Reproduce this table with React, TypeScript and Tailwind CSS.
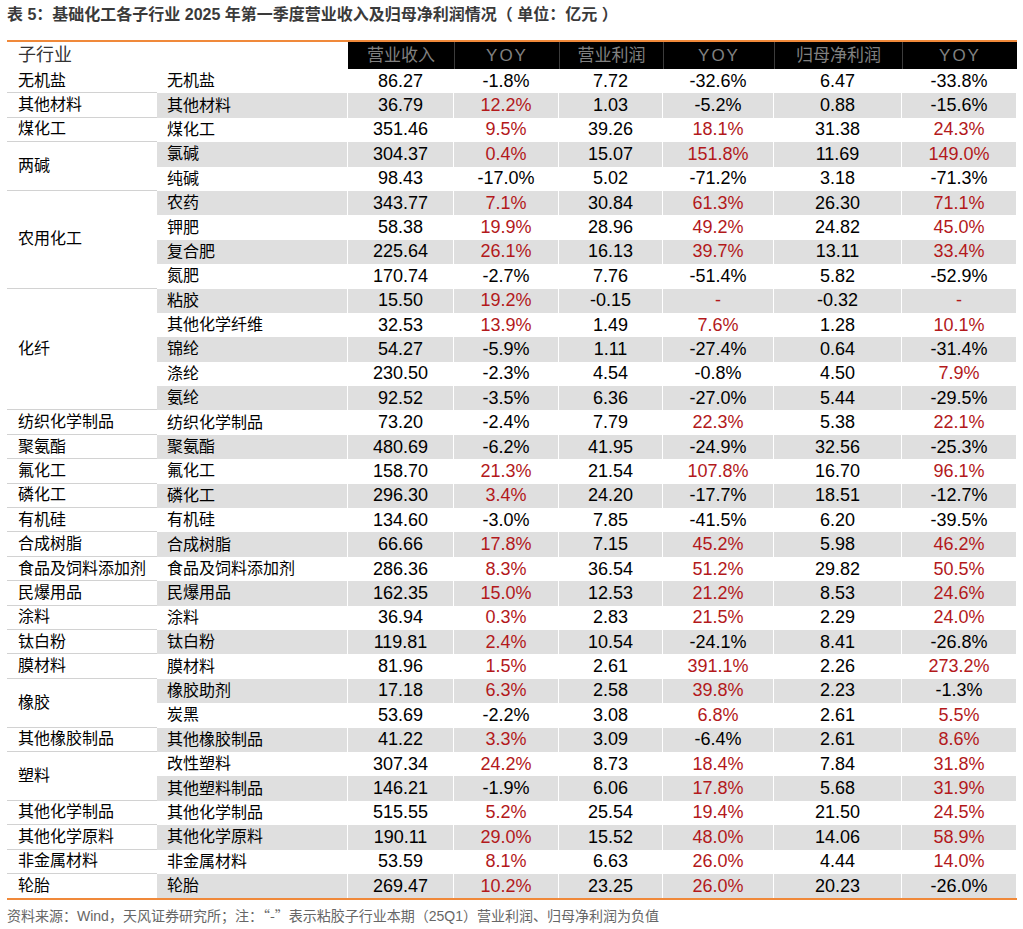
import React from 'react';

type Sub = { s: string; v: string[] };
type Group = { g: string; subs: Sub[] };

const groups: Group[] = [
  { g: '无机盐', subs: [{ s: '无机盐', v: ['86.27', '-1.8%', '7.72', '-32.6%', '6.47', '-33.8%'] }] },
  { g: '其他材料', subs: [{ s: '其他材料', v: ['36.79', '12.2%', '1.03', '-5.2%', '0.88', '-15.6%'] }] },
  { g: '煤化工', subs: [{ s: '煤化工', v: ['351.46', '9.5%', '39.26', '18.1%', '31.38', '24.3%'] }] },
  {
    g: '两碱',
    subs: [
      { s: '氯碱', v: ['304.37', '0.4%', '15.07', '151.8%', '11.69', '149.0%'] },
      { s: '纯碱', v: ['98.43', '-17.0%', '5.02', '-71.2%', '3.18', '-71.3%'] },
    ],
  },
  {
    g: '农用化工',
    subs: [
      { s: '农药', v: ['343.77', '7.1%', '30.84', '61.3%', '26.30', '71.1%'] },
      { s: '钾肥', v: ['58.38', '19.9%', '28.96', '49.2%', '24.82', '45.0%'] },
      { s: '复合肥', v: ['225.64', '26.1%', '16.13', '39.7%', '13.11', '33.4%'] },
      { s: '氮肥', v: ['170.74', '-2.7%', '7.76', '-51.4%', '5.82', '-52.9%'] },
    ],
  },
  {
    g: '化纤',
    subs: [
      { s: '粘胶', v: ['15.50', '19.2%', '-0.15', '-', '-0.32', '-'] },
      { s: '其他化学纤维', v: ['32.53', '13.9%', '1.49', '7.6%', '1.28', '10.1%'] },
      { s: '锦纶', v: ['54.27', '-5.9%', '1.11', '-27.4%', '0.64', '-31.4%'] },
      { s: '涤纶', v: ['230.50', '-2.3%', '4.54', '-0.8%', '4.50', '7.9%'] },
      { s: '氨纶', v: ['92.52', '-3.5%', '6.36', '-27.0%', '5.44', '-29.5%'] },
    ],
  },
  { g: '纺织化学制品', subs: [{ s: '纺织化学制品', v: ['73.20', '-2.4%', '7.79', '22.3%', '5.38', '22.1%'] }] },
  { g: '聚氨酯', subs: [{ s: '聚氨酯', v: ['480.69', '-6.2%', '41.95', '-24.9%', '32.56', '-25.3%'] }] },
  { g: '氟化工', subs: [{ s: '氟化工', v: ['158.70', '21.3%', '21.54', '107.8%', '16.70', '96.1%'] }] },
  { g: '磷化工', subs: [{ s: '磷化工', v: ['296.30', '3.4%', '24.20', '-17.7%', '18.51', '-12.7%'] }] },
  { g: '有机硅', subs: [{ s: '有机硅', v: ['134.60', '-3.0%', '7.85', '-41.5%', '6.20', '-39.5%'] }] },
  { g: '合成树脂', subs: [{ s: '合成树脂', v: ['66.66', '17.8%', '7.15', '45.2%', '5.98', '46.2%'] }] },
  { g: '食品及饲料添加剂', subs: [{ s: '食品及饲料添加剂', v: ['286.36', '8.3%', '36.54', '51.2%', '29.82', '50.5%'] }] },
  { g: '民爆用品', subs: [{ s: '民爆用品', v: ['162.35', '15.0%', '12.53', '21.2%', '8.53', '24.6%'] }] },
  { g: '涂料', subs: [{ s: '涂料', v: ['36.94', '0.3%', '2.83', '21.5%', '2.29', '24.0%'] }] },
  { g: '钛白粉', subs: [{ s: '钛白粉', v: ['119.81', '2.4%', '10.54', '-24.1%', '8.41', '-26.8%'] }] },
  { g: '膜材料', subs: [{ s: '膜材料', v: ['81.96', '1.5%', '2.61', '391.1%', '2.26', '273.2%'] }] },
  {
    g: '橡胶',
    subs: [
      { s: '橡胶助剂', v: ['17.18', '6.3%', '2.58', '39.8%', '2.23', '-1.3%'] },
      { s: '炭黑', v: ['53.69', '-2.2%', '3.08', '6.8%', '2.61', '5.5%'] },
    ],
  },
  { g: '其他橡胶制品', subs: [{ s: '其他橡胶制品', v: ['41.22', '3.3%', '3.09', '-6.4%', '2.61', '8.6%'] }] },
  {
    g: '塑料',
    subs: [
      { s: '改性塑料', v: ['307.34', '24.2%', '8.73', '18.4%', '7.84', '31.8%'] },
      { s: '其他塑料制品', v: ['146.21', '-1.9%', '6.06', '17.8%', '5.68', '31.9%'] },
    ],
  },
  { g: '其他化学制品', subs: [{ s: '其他化学制品', v: ['515.55', '5.2%', '25.54', '19.4%', '21.50', '24.5%'] }] },
  { g: '其他化学原料', subs: [{ s: '其他化学原料', v: ['190.11', '29.0%', '15.52', '48.0%', '14.06', '58.9%'] }] },
  { g: '非金属材料', subs: [{ s: '非金属材料', v: ['53.59', '8.1%', '6.63', '26.0%', '4.44', '14.0%'] }] },
  { g: '轮胎', subs: [{ s: '轮胎', v: ['269.47', '10.2%', '23.25', '26.0%', '20.23', '-26.0%'] }] },
];

const spanClass: Record<number, string> = {
  1: 'row-span-1',
  2: 'row-span-2',
  4: 'row-span-4',
  5: 'row-span-5',
};

const isRed = (val: string) => val === '-' || !val.startsWith('-');

export default function App() {
  const cells: React.ReactNode[] = [];
  let idx = 0;
  groups.forEach((grp, gi) => {
    const last = gi === groups.length - 1;
    grp.subs.forEach((sub, si) => {
      idx++;
      const gray = idx % 2 === 0;
      const bg = gray ? 'bg-[#dfdfdf]' : 'bg-white';
      if (si === 0) {
        cells.push(
          <div
            key={`g${idx}`}
            className={`${spanClass[grp.subs.length]} col-start-1 flex items-center pl-[11px] text-[16px] text-black bg-white ${
              last ? '' : 'border-b border-[#d2d2d2]'
            }`}
          >
            {grp.g}
          </div>
        );
      }
      cells.push(
        <div
          key={`s${idx}`}
          className={`col-start-2 flex items-center pl-[10px] text-[16px] text-black border-r border-white ${bg}`}
        >
          {sub.s}
        </div>
      );
      sub.v.forEach((val, vi) => {
        const pct = vi % 2 === 1;
        const color = pct && isRed(val) ? 'text-[#b3191b]' : 'text-black';
        cells.push(
          <div
            key={`v${idx}-${vi}`}
            className={`flex items-center justify-center text-[18px] border-r border-white ${bg} ${color}`}
          >
            {val}
          </div>
        );
      });
    });
  });

  const cols = 'grid grid-cols-[150px_191px_106px_105px_104px_111px_128px_115px]';

  return (
    <div className="w-[1023px] h-[929px] bg-white font-['Liberation_Sans','Noto_Sans_CJK_SC',sans-serif] pl-[7px]">
      <div className="pt-[5px] h-[25px] leading-[20px] text-[16px] font-bold text-[#3a3a3a]">
        表 5：基础化工各子行业 2025 年第一季度营业收入及归母净利润情况（ 单位：亿元 ）
      </div>
      <div className="mt-[15px] w-[1010px]">
        <div className={`${cols} h-[29px] border-t-2 border-b-2 border-[#f0893a]`}>
          <div className="col-span-2 flex items-center pl-[11px] text-[18px] text-[#333] bg-white">子行业</div>
          <div className="flex items-center justify-center bg-black text-[#808080] text-[17px]">营业收入</div>
          <div className="flex items-center justify-center bg-black text-[#808080] text-[17px] tracking-[2px] border-l border-[#3c3c3c]">YOY</div>
          <div className="flex items-center justify-center bg-black text-[#808080] text-[17px] border-l border-[#3c3c3c]">营业利润</div>
          <div className="flex items-center justify-center bg-black text-[#808080] text-[17px] tracking-[2px] border-l border-[#3c3c3c]">YOY</div>
          <div className="flex items-center justify-center bg-black text-[#808080] text-[17px] border-l border-[#3c3c3c]">归母净利润</div>
          <div className="flex items-center justify-center bg-black text-[#808080] text-[17px] tracking-[2px] border-l border-[#3c3c3c]">YOY</div>
        </div>
        <div className={`${cols} auto-rows-[24.4px] border-b-2 border-[#f0893a]`}>{cells}</div>
      </div>
      <div className="mt-[5px] leading-[20px] text-[14px] text-[#666]">
        资料来源：Wind，天风证券研究所；注：
        <span className="font-['Noto_Sans_CJK_SC',sans-serif]">“-”</span>
        表示粘胶子行业本期（25Q1）营业利润、归母净利润为负值
      </div>
    </div>
  );
}
